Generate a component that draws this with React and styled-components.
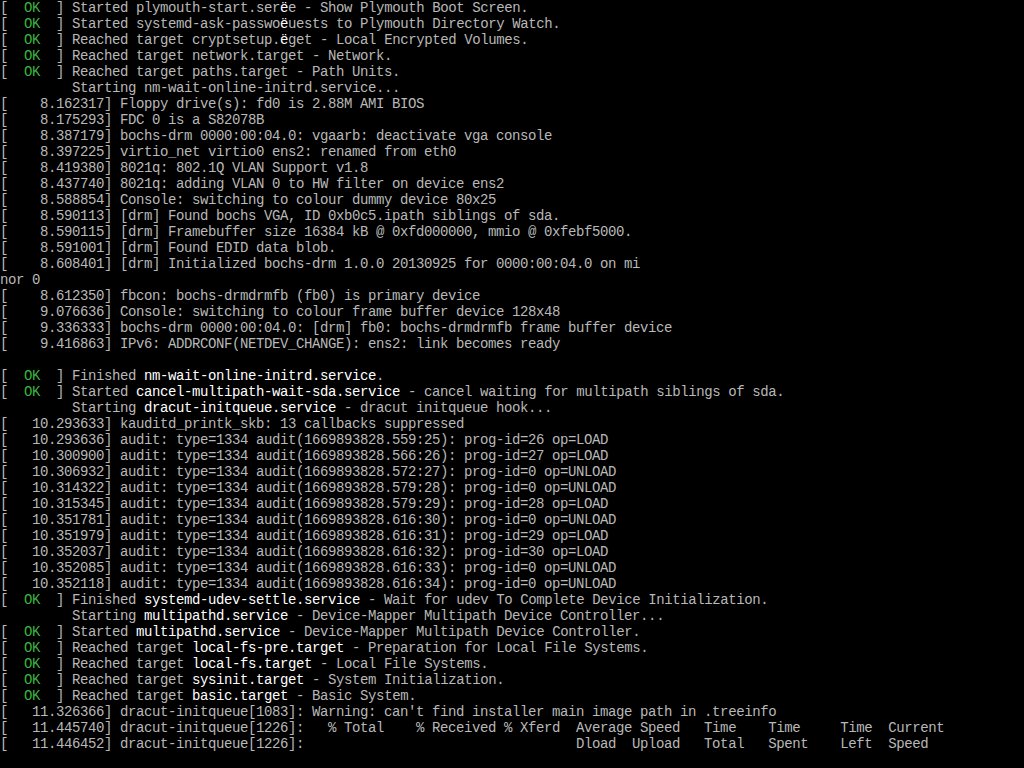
import React from "react";
import styled, { createGlobalStyle } from "styled-components";

// Boot console, 128x48 cells of 8x16 px.
// `ok` lines get the green [  OK  ] tag, text between * is bright white.

const lines = [
  { ok: true, text: "Started plymouth-start.ser*ë*e - Show Plymouth Boot Screen." },
  { ok: true, text: "Started systemd-ask-passwo*ë*uests to Plymouth Directory Watch." },
  { ok: true, text: "Reached target cryptsetup.*ë*get - Local Encrypted Volumes." },
  { ok: true, text: "Reached target network.target - Network." },
  { ok: true, text: "Reached target paths.target - Path Units." },
  { text: "         Starting nm-wait-online-initrd.service..." },
  { text: "[    8.162317] Floppy drive(s): fd0 is 2.88M AMI BIOS" },
  { text: "[    8.175293] FDC 0 is a S82078B" },
  { text: "[    8.387179] bochs-drm 0000:00:04.0: vgaarb: deactivate vga console" },
  { text: "[    8.397225] virtio_net virtio0 ens2: renamed from eth0" },
  { text: "[    8.419380] 8021q: 802.1Q VLAN Support v1.8" },
  { text: "[    8.437740] 8021q: adding VLAN 0 to HW filter on device ens2" },
  { text: "[    8.588854] Console: switching to colour dummy device 80x25" },
  { text: "[    8.590113] [drm] Found bochs VGA, ID 0xb0c5.ipath siblings of sda." },
  { text: "[    8.590115] [drm] Framebuffer size 16384 kB @ 0xfd000000, mmio @ 0xfebf5000." },
  { text: "[    8.591001] [drm] Found EDID data blob." },
  { text: "[    8.608401] [drm] Initialized bochs-drm 1.0.0 20130925 for 0000:00:04.0 on mi" },
  { text: "nor 0" },
  { text: "[    8.612350] fbcon: bochs-drmdrmfb (fb0) is primary device" },
  { text: "[    9.076636] Console: switching to colour frame buffer device 128x48" },
  { text: "[    9.336333] bochs-drm 0000:00:04.0: [drm] fb0: bochs-drmdrmfb frame buffer device" },
  { text: "[    9.416863] IPv6: ADDRCONF(NETDEV_CHANGE): ens2: link becomes ready" },
  { text: "" },
  { ok: true, text: "Finished *nm-wait-online-initrd.service*." },
  { ok: true, text: "Started *cancel-multipath-wait-sda.service* - cancel waiting for multipath siblings of sda." },
  { text: "         Starting *dracut-initqueue.service* - dracut initqueue hook..." },
  { text: "[   10.293633] kauditd_printk_skb: 13 callbacks suppressed" },
  { text: "[   10.293636] audit: type=1334 audit(1669893828.559:25): prog-id=26 op=LOAD" },
  { text: "[   10.300900] audit: type=1334 audit(1669893828.566:26): prog-id=27 op=LOAD" },
  { text: "[   10.306932] audit: type=1334 audit(1669893828.572:27): prog-id=0 op=UNLOAD" },
  { text: "[   10.314322] audit: type=1334 audit(1669893828.579:28): prog-id=0 op=UNLOAD" },
  { text: "[   10.315345] audit: type=1334 audit(1669893828.579:29): prog-id=28 op=LOAD" },
  { text: "[   10.351781] audit: type=1334 audit(1669893828.616:30): prog-id=0 op=UNLOAD" },
  { text: "[   10.351979] audit: type=1334 audit(1669893828.616:31): prog-id=29 op=LOAD" },
  { text: "[   10.352037] audit: type=1334 audit(1669893828.616:32): prog-id=30 op=LOAD" },
  { text: "[   10.352085] audit: type=1334 audit(1669893828.616:33): prog-id=0 op=UNLOAD" },
  { text: "[   10.352118] audit: type=1334 audit(1669893828.616:34): prog-id=0 op=UNLOAD" },
  { ok: true, text: "Finished *systemd-udev-settle.service* - Wait for udev To Complete Device Initialization." },
  { text: "         Starting *multipathd.service* - Device-Mapper Multipath Device Controller..." },
  { ok: true, text: "Started *multipathd.service* - Device-Mapper Multipath Device Controller." },
  { ok: true, text: "Reached target *local-fs-pre.target* - Preparation for Local File Systems." },
  { ok: true, text: "Reached target *local-fs.target* - Local File Systems." },
  { ok: true, text: "Reached target *sysinit.target* - System Initialization." },
  { ok: true, text: "Reached target *basic.target* - Basic System." },
  { text: "[   11.326366] dracut-initqueue[1083]: Warning: can't find installer main image path in .treeinfo" },
  { text: "[   11.445740] dracut-initqueue[1226]:   % Total    % Received % Xferd  Average Speed   Time    Time     Time  Current" },
  { text: "[   11.446452] dracut-initqueue[1226]:                                  Dload  Upload   Total   Spent    Left  Speed" },
];

function renderText(text) {
  // odd pieces are the bright ones
  return text.split("*").map((part, i) =>
    i % 2 === 1 ? <Bright key={i}>{part}</Bright> : part
  );
}

export default function App() {
  return (
    <>
      <GlobalStyle />
      <Screen>
        {lines.map((line, i) => (
          <Line key={i}>
            {line.ok ? (
              <>
                {"[  "}
                <Ok>OK</Ok>
                {"  ] "}
              </>
            ) : null}
            {renderText(line.text)}
          </Line>
        ))}
      </Screen>
    </>
  );
}

// Styles

const GlobalStyle = createGlobalStyle`
  html, body {
    margin: 0;
    padding: 0;
    background: #000;
  }
`;

const Screen = styled.div`
  width: 1024px;
  height: 768px;
  overflow: hidden;
  background-color: #000;
  color: #b8b8b8;
  font-family: "Liberation Mono", "DejaVu Sans Mono", monospace;
  font-size: 14px;
  letter-spacing: -0.4px;
  line-height: 16px;
`;

const Line = styled.div`
  height: 16px;
  white-space: pre;
`;

const Ok = styled.span`
  color: #3cb43c;
`;

const Bright = styled.span`
  color: #ffffff;
`;
